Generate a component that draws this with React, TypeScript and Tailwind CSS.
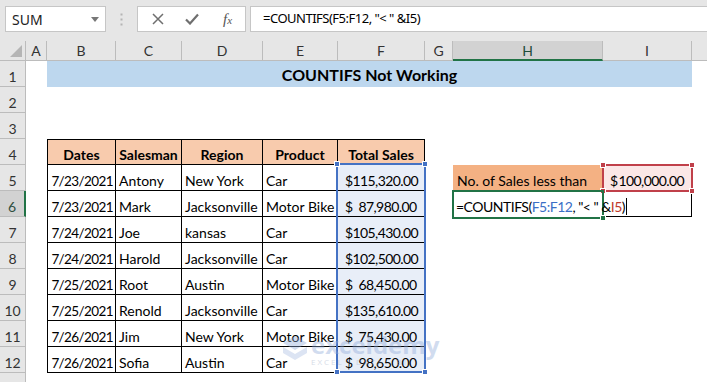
import type { ReactNode } from 'react'

type Col = { key: string; w: string }

const COLS: Col[] = [
  { key: 'A', w: 'w-[21px]' },
  { key: 'B', w: 'w-[69px]' },
  { key: 'C', w: 'w-[66px]' },
  { key: 'D', w: 'w-[81px]' },
  { key: 'E', w: 'w-[75px]' },
  { key: 'F', w: 'w-[87px]' },
  { key: 'G', w: 'w-[28px]' },
  { key: 'H', w: 'w-[150px]' },
  { key: 'I', w: 'w-[89px]' },
]

const SALES = [
  ['7/23/2021', 'Antony', 'New York', 'Car', '115,320.00'],
  ['7/23/2021', 'Mark', 'Jacksonville', 'Motor Bike', '87,980.00'],
  ['7/24/2021', 'Joe', 'kansas', 'Car', '105,430.00'],
  ['7/24/2021', 'Harold', 'Jacksonville', 'Car', '102,500.00'],
  ['7/25/2021', 'Root', 'Austin', 'Motor Bike', '68,450.00'],
  ['7/25/2021', 'Renold', 'Jacksonville', 'Car', '135,610.00'],
  ['7/26/2021', 'Jim', 'New York', 'Motor Bike', '75,430.00'],
  ['7/26/2021', 'Sofia', 'Austin', 'Car', '98,650.00'],
]

const HEADERS = ['Dates', 'Salesman', 'Region', 'Product', 'Total Sales']

function FormulaBar() {
  return (
    <div className="h-[41px] bg-[#e6e6e6] flex items-start pt-[6px] pl-[5px] font-['Noto_Sans',sans-serif] text-[14px] text-[#222]">
      <div className="w-[101px] h-[26px] bg-white border border-[#c6c6c6] flex items-center justify-between pl-[6px] pr-[6px]">
        <span>SUM</span>
        <svg width="8" height="5" viewBox="0 0 8 5">
          <path d="M0 0h8L4 5z" fill="#777" />
        </svg>
      </div>
      <div className="w-[31px] h-[26px] flex items-center justify-center">
        <svg width="3" height="13" viewBox="0 0 3 13">
          <rect x="0.5" y="0.5" width="2" height="2" fill="#b4b4b4" />
          <rect x="0.5" y="5.5" width="2" height="2" fill="#b4b4b4" />
          <rect x="0.5" y="10.5" width="2" height="2" fill="#b4b4b4" />
        </svg>
      </div>
      <div className="w-[109px] h-[26px] bg-white border border-[#c6c6c6] flex items-center pl-[14px] gap-[21px]">
        <svg width="12" height="12" viewBox="0 0 12 12">
          <path d="M1 1l10 10M11 1L1 11" stroke="#6f6f6f" strokeWidth="1.5" />
        </svg>
        <svg width="14" height="12" viewBox="0 0 14 12">
          <path d="M1 6.5l4 4L13 1.5" stroke="#6f6f6f" strokeWidth="2.2" fill="none" />
        </svg>
        <span className="font-['Liberation_Serif',serif] italic text-[#555] text-[15px] ml-[3px] leading-none">
          f<span className="text-[11px]">x</span>
        </span>
      </div>
      <div className="ml-[4px] flex-1 h-[26px] bg-white border border-r-0 border-[#c6c6c6] flex items-center pl-[12px] text-[13px] tracking-[-0.5px] text-black whitespace-pre">
        =COUNTIFS(F5:F12, "&lt; " &amp;I5)
      </div>
    </div>
  )
}

function ColumnHeaders() {
  return (
    <div className="h-[20px] flex bg-[#e6e6e6] text-[14px] text-[#333]">
      <div className="w-[26px] h-full border-r border-b border-[#bcbcbc] flex items-end justify-end pr-[3px] pb-[3px]">
        <svg width="12" height="12" viewBox="0 0 12 12">
          <path d="M12 0v12H0z" fill="#b5b5b5" />
        </svg>
      </div>
      {COLS.map(c =>
        c.key === 'H' ? (
          <div
            key={c.key}
            className={`${c.w} h-full bg-[#d2d2d2] border-r border-[#bcbcbc] border-b-2 border-b-[#217346] flex items-center justify-center text-[#1e4d3a]`}
          >
            {c.key}
          </div>
        ) : (
          <div key={c.key} className={`${c.w} h-full border-r border-b border-[#bcbcbc] flex items-center justify-center`}>
            {c.key}
          </div>
        ),
      )}
      <div className="flex-1 h-full border-b border-[#bcbcbc]" />
    </div>
  )
}

function RowHead({ n }: { n: number }) {
  if (n === 6) {
    return (
      <div className="w-[26px] h-full shrink-0 bg-[#d2d2d2] border-r-2 border-[#217346] border-b border-b-[#bcbcbc] flex items-end justify-center leading-[18px] text-[#2f4f3f]">
        {n}
      </div>
    )
  }
  return (
    <div className="w-[26px] h-full shrink-0 bg-[#e6e6e6] border-r border-b border-[#bcbcbc] flex items-end justify-center leading-[18px] text-[#333]">
      {n < 13 ? n : ''}
    </div>
  )
}

function Row({ n, children }: { n: number; children?: ReactNode }) {
  return (
    <div className="h-[26px] flex">
      <RowHead n={n} />
      <div className="w-[21px] shrink-0" />
      {children}
    </div>
  )
}

function Money({ v, className }: { v: string; className: string }) {
  return (
    <div className={`${className} flex items-end justify-between leading-[18px] pl-[7px] pr-[8px] whitespace-pre tracking-[-0.6px]`}>
      <span>$</span>
      <span>{v}</span>
    </div>
  )
}

export default function App() {
  return (
    <div className="w-[707px] h-[382px] overflow-hidden bg-white font-['Lato',sans-serif] text-[14px] text-black">
      <FormulaBar />
      <ColumnHeaders />
      <div className="relative">
        <Row n={1}>
          <div className="w-[645px] h-full bg-[#bdd7ee] flex items-center justify-center font-bold text-[16px] pt-[1px]">
            COUNTIFS Not Working
          </div>
        </Row>
        <Row n={2} />
        <Row n={3} />
        <Row n={4}>
          {HEADERS.map((h, i) => (
            <div
              key={h}
              className={`${COLS[i + 1].w} h-full bg-[#f8cbad] border-t border-r border-b border-black ${i === 0 ? 'border-l' : ''} flex items-end justify-center leading-[18px] font-bold`}
            >
              {h}
            </div>
          ))}
        </Row>
        {SALES.map((r, idx) => {
          const n = idx + 5
          return (
            <Row key={n} n={n}>
              <div className="w-[69px] h-full border-l border-r border-b border-black flex items-end justify-end pr-[2px] leading-[18px] text-[13.5px] tracking-[-0.6px]">
                {r[0]}
              </div>
              <div className="w-[66px] h-full border-r border-b border-black flex items-end pl-[3px] leading-[18px]">{r[1]}</div>
              <div className="w-[81px] h-full border-r border-b border-black flex items-end pl-[3px] leading-[18px] whitespace-nowrap overflow-hidden">
                {r[2]}
              </div>
              <div className="w-[75px] h-full border-r border-b border-black flex items-end pl-[3px] leading-[18px] whitespace-nowrap">{r[3]}</div>
              <Money v={r[4].length < 10 ? '  ' + r[4] : r[4]} className="w-[87px] h-full bg-[#e8eef8] border-r border-b border-black" />
              <div className="w-[28px] shrink-0" />
              {n === 5 && (
                <>
                  <div className="w-[150px] h-full bg-[#f4b183] flex items-end pl-[4px] pb-px leading-[18px] whitespace-nowrap">
                    No. of Sales less than
                  </div>
                  <Money v="100,000.00" className="w-[89px] h-full bg-[#fbe7e7] pb-px" />
                </>
              )}
              {n === 6 && (
                <>
                  <div className="w-[150px] h-full relative z-10 flex items-end pl-[3px] pb-px leading-[18px] whitespace-pre overflow-visible tracking-[-0.5px]">
                    <span>
                      =COUNTIFS(<span className="text-[#3b6fc6]">F5:F12</span>, "&lt; " &amp;<span className="text-[#c0392b]">I5</span>)
                    </span>
                    <span className="inline-block shrink-0 w-px h-[17px] bg-black ml-[1px] mb-[1px]" />
                  </div>
                  <div className="w-[89px] h-full border-r border-b border-black" />
                </>
              )}
            </Row>
          )
        })}
        <Row n={13} />

        {/* F5:F12 reference range */}
        <div className="absolute left-[336px] top-[102px] w-[90px] h-[210px] border-2 border-[#4472c4] pointer-events-none" />
        <Handle className="left-[334px] top-[100px] bg-[#4472c4]" />
        <Handle className="left-[422px] top-[100px] bg-[#4472c4]" />
        <Handle className="left-[334px] top-[308px] bg-[#4472c4]" />
        <Handle className="left-[422px] top-[308px] bg-[#4472c4]" />

        {/* I5 reference */}
        <div className="absolute left-[602px] top-[103px] w-[91px] h-[28px] border-2 border-[#c0404a]" />
        <Handle className="left-[600px] top-[101px] bg-[#c0404a]" />
        <Handle className="left-[689px] top-[101px] bg-[#c0404a]" />
        <Handle className="left-[600px] top-[127px] bg-[#c0404a]" />
        <Handle className="left-[689px] top-[127px] bg-[#c0404a]" />

        {/* active cell H6 */}
        <div className="absolute left-[452px] top-[129px] w-[152px] h-[29px] border-2 border-[#217346]" />
        <div className="absolute left-[600px] top-[154px] w-[6px] h-[6px] bg-[#217346] border border-white" />

        {/* watermark */}
        <div className="absolute left-[283px] top-[272px] flex items-center gap-[4px] opacity-40 pointer-events-none">
          <svg width="24" height="28" viewBox="0 0 24 28">
            <path d="M12 0l12 7-12 7L0 7z" fill="#8fa9d8" />
            <path d="M0 11l12 7 12-7v6l-12 7-12-7z" fill="#a9bde3" />
          </svg>
          <div className="flex flex-col leading-none">
            <span className="font-['Open_Sans',sans-serif] font-bold text-[24px] text-[#8fa9d8]">exceldemy</span>
            <span className="font-['Open_Sans',sans-serif] text-[8px] tracking-[2px] text-[#9aa9c4] mt-[1px]">EXCEL · DATA · BI</span>
          </div>
        </div>
      </div>
    </div>
  )
}

function Handle({ className }: { className: string }) {
  return <div className={`absolute w-[6px] h-[6px] border border-white ${className}`} />
}
